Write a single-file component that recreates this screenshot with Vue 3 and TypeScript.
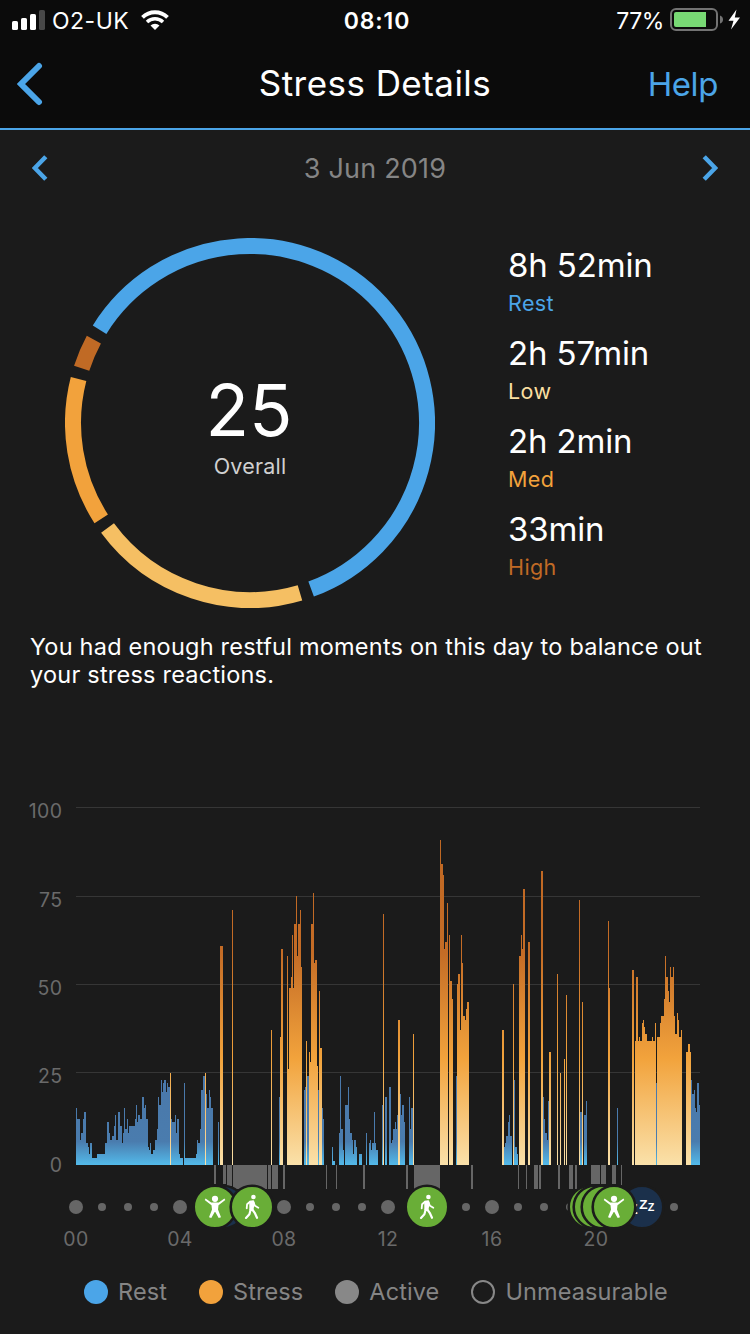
<script setup lang="ts">
interface Arc { name: string; color: string; from: number; to: number }
interface Bar { x: number; w: number; h: number }
interface Stat { value: string; label: string; tone: string }

const arcs: Arc[] = [
  { name: 'rest', color: '#4ba5e8', from: 211.8, to: 429.8 },
  { name: 'low', color: '#f5bf63', from: 73.6, to: 143.6 },
  { name: 'med', color: '#f2a23c', from: 147.2, to: 194.4 },
  { name: 'high', color: '#c06a25', from: 198, to: 208.1 },
]

const arcPath = (arc: Arc): string => {
  const r = 177
  const point = (deg: number) => {
    const a = (deg * Math.PI) / 180
    return `${(185 + r * Math.cos(a)).toFixed(2)} ${(185 + r * Math.sin(a)).toFixed(2)}`
  }
  return `M${point(arc.from)} A${r} ${r} 0 ${arc.to - arc.from > 180 ? 1 : 0} 1 ${point(arc.to)}`
}

const stats: Stat[] = [
  { value: '8h 52min', label: 'Rest', tone: 'rest' },
  { value: '2h 57min', label: 'Low', tone: 'low' },
  { value: '2h 2min', label: 'Med', tone: 'med' },
  { value: '33min', label: 'High', tone: 'high' },
]

// Each run starts at a horizontal offset and lists "width height" steps.
const expand = (runs: [number, string][]): Bar[] =>
  runs.flatMap(([start, steps]) => {
    let x = start
    return steps.split(',').map((step) => {
      const [w, h] = step.split(' ').map(Number)
      const bar = { x, w, h }
      x += w
      return bar
    }).filter((bar) => bar.h > 0)
  })

const restBars = expand([
  [0, '1 57,3 46,1 25,2 32,1 46,2 53,2 22,1 18,1 11,2 22,5 7,8 11,2 22,2 43,1 32,2 25,2 29,1 39,1 50,2 25,2 53,2 39,1 22,1 32,1 57,2 36,1 46,1 32,6 39,1 46,1 60,1 43,2 50,2 46,2 68,1 57,1 60,2 46,1 18,1 15,1 22,2 11,2 15,2 25,1 36,1 68,2 60,1 85,1 73,1 82,2 85,1 73,1 82,2 78'],
  [95, '1 46,3 43,1 50,1 32,2 46,1 11,3 7,1 0,1 82,11 7,1 11,1 25,2 22,1 36,2 75,2 89,1 0,1 71,2 57,1 75,1 68,2 57'],
  [142, '1 43'], [203, '1 68'], [228, '1 75,1 78,1 0,2 89'], [242, '1 75'], [246, '1 57,1 46'],
  [256, '1 18,2 4'], [263, '1 32,1 89,2 36,1 15'], [269, '3 60,1 78,1 46,2 32,1 25,1 11,2 25,1 18'],
  [283, '3 11'], [290, '1 32'], [293, '1 22,1 25,1 15,2 22,1 53,1 22,2 15'], [306, '1 60'], [309, '2 68'],
  [313, '2 78,1 22,1 25,2 36,1 43,1 36,1 50'], [324, '1 71,1 50,2 60,1 43'], [333, '1 68,1 36,2 57'],
  [380, '1 89'], [428, '1 18,1 22,2 29,1 43,1 50,2 29'], [438, '1 85,2 18,1 11'],
  [467, '1 68,1 46,2 32,1 25,1 64'], [504, '2 53'], [508, '2 50,1 64'], [541, '1 57'], [580, '1 82'],
  [615, '1 85,2 71,1 75,1 57,1 53,2 82,1 60'],
])

const stressBars = expand([
  [94, '1 92'], [129, '1 92'], [144, '3 219'], [156, '1 255'], [195, '1 135'], [204, '1 128,2 216'],
  [211, '1 209,1 96,2 177,1 188,1 230,1 177,2 241,1 269,1 209,2 241,1 255,1 198'],
  [230, '1 124'], [233, '1 113,1 103,2 241,1 272,1 202,2 205,1 99'], [243, '1 174,2 117'],
  [307, '1 251'], [322, '2 145'], [337, '1 131'],
  [364, '1 325,2 301,1 290,1 216,2 223,1 262'], [373, '1 230,2 184,1 166'],
  [381, '1 181,2 191,1 135,1 230,1 202,2 149,1 145,1 156,2 163'],
  [426, '2 135'], [437, '1 181'], [443, '2 209,1 230,1 216,2 276'], [452, '2 223'], [465, '2 294'],
  [473, '2 113'], [481, '1 191'], [484, '1 92'], [488, '1 106'], [490, '1 170'], [503, '1 265'],
  [506, '1 163'], [532, '1 244,1 177'], [556, '2 195'],
  [559, '1 124,2 188,1 124,1 128,2 124,1 142,1 145,1 138,2 131,5 124,1 128,2 124,1 142'],
  [581, '3 128,1 142,3 149,1 166,1 209,2 188,1 174,1 163,1 198,2 188,1 198,1 149,2 131,1 152,1 145,2 128,1 135'],
  [610, '2 113,2 121,1 113'],
])

const activeBars = expand([
  [138, '2 19'], [147, '3 19'], [151, '5 21'], [157, '34 24'], [192, '3 24'], [196, '6 24'], [207, '2 24'],
  [250, '1 24'], [260, '1 24'], [287, '2 24'], [330, '2 24'], [338, '26 24'], [395, '2 24'], [442, '1 24'],
  [450, '1 24'], [458, '4 24'], [463, '2 24'], [482, '2 24'], [493, '4 24'], [499, '2 24'],
  [515, '9 19'], [525, '5 19'], [536, '4 19'], [545, '1 20'],
])

const gridLines = [
  { label: '100', y: 27 }, { label: '75', y: 116 }, { label: '50', y: 204 }, { label: '25', y: 292 },
]
const hourDots = Array.from({ length: 24 }, (_, hour) => hour)
const hourLabels = ['00', '04', '08', '12', '16', '20']
const stackedMarkers = [590, 595, 603]
</script>

<template>
  <main class="screen">
    <header class="top">
      <div class="status">
        <div class="carrier">
          <svg width="34" height="20" viewBox="0 0 34 20">
            <rect x="0" y="11" width="6" height="9" rx="1.6" fill="#fff" />
            <rect x="9" y="8" width="6" height="12" rx="1.6" fill="#fff" />
            <rect x="18" y="4" width="6" height="16" rx="1.6" fill="#fff" />
            <rect x="27" y="0" width="6" height="20" rx="1.6" fill="#484848" />
          </svg>
          <span class="carrier-name">O2-UK</span>
          <svg class="wifi" width="28" height="20" viewBox="0 0 28 20">
            <path d="M1.500 7.300 A18 18 0 0 1 26.500 7.300" fill="none" stroke="#fff" stroke-width="3.900" />
            <path d="M6 12 A11.600 11.600 0 0 1 22 12" fill="none" stroke="#fff" stroke-width="3.500" />
            <path d="M14 20 L9.500 15.500 A6.400 6.400 0 0 1 18.500 15.500 Z" fill="#fff" />
          </svg>
        </div>
        <span class="clock">08:10</span>
        <div class="power">
          <span class="percent">77%</span>
          <svg width="72" height="24" viewBox="0 0 72 24">
            <rect x="1" y="1" width="46" height="21" rx="5" fill="none" stroke="#737373" stroke-width="2" />
            <path d="M6 4 H36 V19 H6 Q4 19 4 17 V6 Q4 4 6 4Z" fill="#78d974" />
            <path d="M50 7.500 Q53 8.500 53 11.500 T50 15.500Z" fill="#737373" />
            <path d="M66.500 1.500 L58.500 12.800 H63.500 L61 21.500 L70 9.500 H64.800Z" fill="#fff" />
          </svg>
        </div>
      </div>
      <nav class="nav">
        <svg class="back" width="26" height="44" viewBox="0 0 26 44">
          <path d="M22 4 L4 22 L22 40" fill="none" stroke="#4ba5e8" stroke-width="6" stroke-linecap="round" />
        </svg>
        <h1 class="title">Stress Details</h1>
        <span class="help">Help</span>
      </nav>
    </header>

    <section class="dates">
      <svg width="16" height="26" viewBox="0 0 16 26">
        <path d="M13.800 1.700 L2.800 13 L13.800 24.300" fill="none" stroke="#4ba5e8" stroke-width="4.500" />
      </svg>
      <span class="date">3 Jun 2019</span>
      <svg width="16" height="26" viewBox="0 0 16 26">
        <path d="M2.200 1.700 L13.200 13 L2.200 24.300" fill="none" stroke="#4ba5e8" stroke-width="4.500" />
      </svg>
    </section>

    <section class="summary">
      <div class="ring">
        <svg class="ring-art" width="370" height="370" viewBox="0 0 370 370">
          <path v-for="arc in arcs" :key="arc.name" :d="arcPath(arc)" :stroke="arc.color" fill="none" stroke-width="16" />
        </svg>
        <div class="ring-text">
          <span class="score">25</span>
          <span class="score-label">Overall</span>
        </div>
      </div>
      <div class="stats">
        <div v-for="stat in stats" :key="stat.label" class="stat">
          <span class="stat-value">{{ stat.value }}</span>
          <span class="stat-label" :class="stat.tone">{{ stat.label }}</span>
        </div>
      </div>
    </section>

    <p class="message"><span class="line">You had enough restful moments on this day to balance out</span> <span class="line">your stress reactions.</span></p>

    <svg class="chart" width="750" height="480" viewBox="0 0 750 480">
      <defs>
        <linearGradient id="stressFill" gradientUnits="userSpaceOnUse" x1="0" y1="385" x2="0" y2="31">
          <stop offset="0" stop-color="#fae1aa" />
          <stop offset="0.3" stop-color="#f2a33c" />
          <stop offset="0.6" stop-color="#c46c26" />
          <stop offset="1" stop-color="#bd6622" />
        </linearGradient>
        <linearGradient id="restFill" gradientUnits="userSpaceOnUse" x1="0" y1="385" x2="0" y2="295">
          <stop offset="0" stop-color="#53baea" />
          <stop offset="0.26" stop-color="#4a7cae" />
          <stop offset="1" stop-color="#4a78aa" />
        </linearGradient>
        <g id="stretch" fill="#fff">
          <circle cx="0" cy="-8.200" r="3.100" />
          <path d="M-10.300 -7 L-9.400 -8.400 L-3.800 -4.600 H3.800 L9.400 -8.400 L10.300 -7 L3.500 -1.800 L3 2.500 L6 10.200 L3.700 11 L.3 5 H-.3 L-3.700 11 L-6 10.200 L-3 2.500 L-3.500 -1.800Z" />
        </g>
        <g id="walk" fill="none" stroke="#fff" stroke-linecap="round" stroke-linejoin="round">
          <circle cx="1.400" cy="-10" r="2.300" fill="#fff" stroke="none" />
          <path d="M-2 -5.500 L1.300 -6 L2 -4 L.8 2 L-1.900 2.500Z" fill="#fff" stroke-width="1.500" />
          <path d="M1.500 -4.500 L3 -1.200 L6.300 .7 M-2 -5.300 L-4.900 -2.800 L-5.300 1.300" stroke-width="1.800" />
          <path d="M0 2 L2.700 5.800 L5 10.800 M-1.200 2 L-2.600 7.300 L-6 10.900" stroke-width="2.200" />
        </g>
      </defs>

      <g v-for="line in gridLines" :key="line.label">
        <rect x="76" :y="line.y" width="624" height="1" fill="#363636" />
        <text class="axis" x="62.500" :y="line.y + 11" text-anchor="end">{{ line.label }}</text>
      </g>
      <text class="axis" x="62.500" y="392" text-anchor="end">0</text>

      <g transform="translate(76 0)" shape-rendering="crispEdges">
        <rect v-for="bar in restBars" :key="'r' + bar.x" :x="bar.x" :y="385 - bar.h" :width="bar.w" :height="bar.h" fill="url(#restFill)" />
        <rect v-for="bar in stressBars" :key="'s' + bar.x" :x="bar.x" :y="385 - bar.h" :width="bar.w" :height="bar.h" fill="url(#stressFill)" />
        <rect v-for="bar in activeBars" :key="'a' + bar.x" :x="bar.x" y="385" :width="bar.w" :height="bar.h" fill="#666" />
      </g>

      <circle v-for="hour in hourDots" :key="hour" :cx="76 + hour * 26" cy="427" :r="hour % 4 === 0 ? 7 : 4" fill="#666" />
      <text v-for="(label, i) in hourLabels" :key="label" class="axis" :x="76 + i * 104" y="466" text-anchor="middle">{{ label }}</text>

      <g stroke="#1b1b1b" stroke-width="2.600">
        <circle cx="224" cy="427" r="21" fill="#1b304b" />
        <circle cx="215" cy="427" r="21.300" fill="#69ae37" />
        <circle cx="252" cy="427" r="21.300" fill="#69ae37" />
        <circle cx="427" cy="427" r="21.300" fill="#69ae37" />
        <circle cx="642" cy="427" r="21.300" fill="#1b304b" />
      </g>
      <g class="snooze">
        <text x="629" y="434" font-size="14">Z</text>
        <text x="639.300" y="428.500" font-size="13.500">Z</text>
        <text x="647.800" y="431.300" font-size="10.800">Z</text>
      </g>
      <g stroke="#1b1b1b" stroke-width="2.600" fill="#69ae37">
        <circle v-for="cx in stackedMarkers" :key="cx" :cx="cx" cy="427" r="21.300" />
        <circle cx="614" cy="427" r="21.300" />
      </g>
      <use href="#stretch" x="215" y="427" />
      <use href="#walk" x="252" y="427" />
      <use href="#walk" x="427" y="427" />
      <use href="#stretch" x="614" y="427" />
    </svg>

    <footer class="legend">
      <div class="key"><i class="swatch swatch-rest"></i><span>Rest</span></div>
      <div class="key"><i class="swatch swatch-stress"></i><span>Stress</span></div>
      <div class="key"><i class="swatch swatch-active"></i><span>Active</span></div>
      <div class="key"><i class="swatch swatch-none"></i><span>Unmeasurable</span></div>
    </footer>
  </main>
</template>

<style>
body { background: #1b1b1b; }
</style>

<style scoped>
* { box-sizing: border-box; }
.screen { width: 750px; height: 1334px; overflow: hidden; background: #1b1b1b; color: #fff; font-family: Inter, "Liberation Sans", sans-serif; }
svg { display: block; flex: none; }
.top { height: 130px; background: #0b0b0b; border-bottom: 2px solid #4ba5e8; }
.status { height: 40px; display: grid; grid-template-columns: 1fr auto 1fr; align-items: center; padding: 0 8px 0 12px; font-size: 23px; }
.carrier { display: flex; align-items: center; }
.carrier-name { width: 84px; margin-left: 6px; padding-top: 2px; letter-spacing: 0.5px; }
.wifi { margin-left: 5px; }
.clock { padding-top: 2px; font-weight: 600; letter-spacing: 0.9px; }
.power { display: flex; align-items: center; justify-content: flex-end; gap: 6px; }
.percent { padding-top: 2px; letter-spacing: -0.4px; }
.nav { height: 88px; display: grid; grid-template-columns: 1fr auto 1fr; align-items: center; padding: 0 32px 0 17px; }
.title { margin: 0 0 3px 15px; font-size: 35px; font-weight: 400; letter-spacing: 0.45px; }
.help { justify-self: end; color: #4ba5e8; font-size: 33px; letter-spacing: -0.4px; }
.dates { height: 76px; display: flex; align-items: center; justify-content: space-between; padding: 0 32px; }
.date { color: #858585; font-size: 27px; letter-spacing: 0.2px; }
.summary { height: 426px; display: flex; padding: 32px 0 0 65px; }
.ring { display: grid; width: 370px; height: 370px; }
.ring-art, .ring-text { grid-area: 1 / 1; }
.ring-text { display: flex; flex-direction: column; align-items: center; padding-top: 127px; }
.score { margin-right: 2px; font-size: 71.5px; line-height: 90px; }
.score-label { color: #d0d0d0; font-size: 21.5px; line-height: 22px; letter-spacing: 0.2px; }
.stats { margin-left: 73px; padding-top: 6px; }
.stat { height: 88px; display: flex; flex-direction: column; }
.stat-value { font-size: 33px; line-height: 42px; letter-spacing: -0.15px; }
.stat-label { font-size: 21.5px; line-height: 34px; letter-spacing: 0.4px; }
.rest { color: #4ba5e8; }
.low { color: #fadfa0; }
.med { color: #f2a23c; }
.high { color: #c06a25; }
.message { margin: 0; height: 148px; padding: 1px 30px 0; font-size: 23.5px; line-height: 28px; white-space: nowrap; }
.line { display: block; letter-spacing: 0.22px; }
.axis { fill: #6a6a6a; font-size: 19.5px; letter-spacing: 0.4px; }
.snooze { fill: #fff; font-family: "Liberation Sans", sans-serif; font-weight: 700; }
.legend { display: flex; gap: 32px; padding: 20px 0 0 84px; color: #858585; font-size: 23.5px; line-height: 24px; }
.key { display: flex; align-items: center; gap: 10px; letter-spacing: 0.1px; }
.swatch { width: 24px; height: 24px; border-radius: 50%; }
.swatch-rest { background: #4ba5e8; }
.swatch-stress { background: #f2a23c; }
.swatch-active { background: #888; }
.swatch-none { border: 2px solid #888; }
</style>
